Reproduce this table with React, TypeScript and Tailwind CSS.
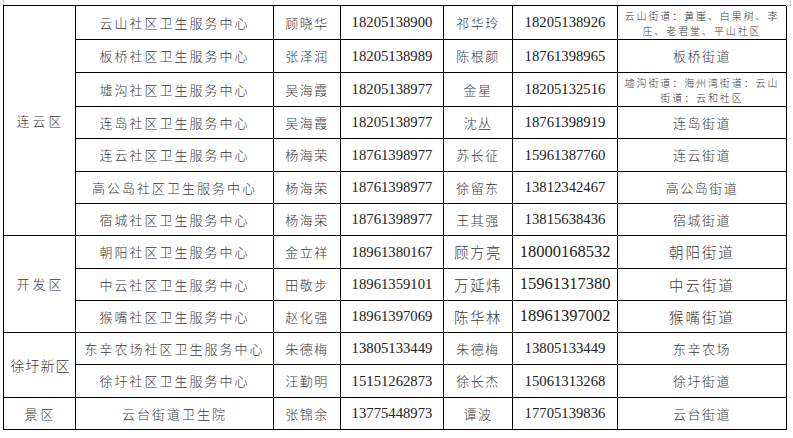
import React from "react";

type Row = {
  district?: { text: string; span: number; cls?: string };
  center: string;
  n1: string;
  p1: string;
  n2: string;
  p2: string;
  street: string[];
  streetSmall?: boolean;
  big?: boolean;
  h: number;
};

const rows: Row[] = [
  { district: { text: "连云区", span: 7 }, center: "云山社区卫生服务中心", n1: "顾晓华", p1: "18205138900", n2: "祁华玲", p2: "18205138926", street: ["云山街道：黄崖、白果树、李", "庄、老君堂、平山社区"], streetSmall: true, h: 34 },
  { center: "板桥社区卫生服务中心", n1: "张泽润", p1: "18205138989", n2: "陈根颜", p2: "18761398965", street: ["板桥街道"], h: 33 },
  { center: "墟沟社区卫生服务中心", n1: "吴海霞", p1: "18205138977", n2: "金星", p2: "18205132516", street: ["墟沟街道：海州湾街道：云山", "街道：云和社区"], streetSmall: true, h: 34 },
  { center: "连岛社区卫生服务中心", n1: "吴海霞", p1: "18205138977", n2: "沈丛", p2: "18761398919", street: ["连岛街道"], h: 32 },
  { center: "连云社区卫生服务中心", n1: "杨海荣", p1: "18761398977", n2: "苏长征", p2: "15961387760", street: ["连云街道"], h: 33 },
  { center: "高公岛社区卫生服务中心", n1: "杨海荣", p1: "18761398977", n2: "徐留东", p2: "13812342467", street: ["高公岛街道"], h: 32 },
  { center: "宿城社区卫生服务中心", n1: "杨海荣", p1: "18761398977", n2: "王其强", p2: "13815638436", street: ["宿城街道"], h: 32 },
  { district: { text: "开发区", span: 3 }, center: "朝阳社区卫生服务中心", n1: "金立祥", p1: "18961380167", n2: "顾方亮", p2: "18000168532", street: ["朝阳街道"], big: true, h: 33 },
  { center: "中云社区卫生服务中心", n1: "田敬步", p1: "18961359101", n2: "万延炜", p2: "15961317380", street: ["中云街道"], big: true, h: 32 },
  { center: "猴嘴社区卫生服务中心", n1: "赵化强", p1: "18961397069", n2: "陈华林", p2: "18961397002", street: ["猴嘴街道"], big: true, h: 32 },
  { district: { text: "徐圩新区", span: 2, cls: "text-[14px] tracking-[1px]" }, center: "东辛农场社区卫生服务中心", n1: "朱德梅", p1: "13805133449", n2: "朱德梅", p2: "13805133449", street: ["东辛农场"], h: 32 },
  { center: "徐圩社区卫生服务中心", n1: "汪勤明", p1: "15151262873", n2: "徐长杰", p2: "15061313268", street: ["徐圩街道"], h: 33 },
  { district: { text: "景区", span: 1 }, center: "云台街道卫生院", n1: "张锦余", p1: "13775448973", n2: "谭波", p2: "17705139836", street: ["云台街道"], h: 32 },
];

const cjk = "font-['Noto_Sans_CJK_SC',sans-serif] font-light text-[#3a3a3a]";
const num = "font-['Liberation_Serif','Times_New_Roman',serif] text-[#222]";
const cell = "border border-black text-center align-middle p-0 overflow-hidden";

export default function App() {
  return (
    <div className="relative w-[793px] h-[438px] bg-white">
      <div className="absolute left-[3px] top-0 w-px h-[5px] bg-[#c8c8c8]" />
      <div className="absolute left-[790px] top-0 w-px h-[5px] bg-[#c8c8c8]" />
      <div className="absolute left-[786px] top-[5px] w-[5px] h-px bg-[#c8c8c8]" />
      <div className="pt-[5px] pl-[3px]">
        <table className="table-fixed border-collapse w-[783px]">
          <colgroup>
            <col className="w-[72px]" />
            <col className="w-[198px]" />
            <col className="w-[67px]" />
            <col className="w-[103px]" />
            <col className="w-[69px]" />
            <col className="w-[105px]" />
            <col className="w-[169px]" />
          </colgroup>
          <tbody>
            {rows.map((r, i) => (
              <tr key={i} style={{ height: r.h }}>
                {r.district && (
                  <td rowSpan={r.district.span} className={`${cell} ${cjk} whitespace-nowrap ${r.district.cls ?? "text-[13px] tracking-[3px]"}`}>
                    <span className="relative left-[1px]">{r.district.text}</span>
                  </td>
                )}
                <td className={`${cell} ${cjk} whitespace-nowrap text-[13px] tracking-[2px]`}>{r.center}</td>
                <td className={`${cell} ${cjk} whitespace-nowrap text-[13px] tracking-[1.5px]`}>{r.n1}</td>
                <td className={`${cell} ${num} whitespace-nowrap text-[14.7px]`}>{r.p1}</td>
                <td className={`${cell} ${cjk} whitespace-nowrap ${r.big ? "text-[14.5px] tracking-[1.5px]" : "text-[13px] tracking-[1.5px]"}`}>{r.n2}</td>
                <td className={`${cell} ${num} whitespace-nowrap ${r.big ? "text-[16.5px]" : "text-[14.7px]"}`}>{r.p2}</td>
                {r.streetSmall ? (
                  <td className={`${cell} ${cjk} text-[10px] tracking-[1.9px] leading-[15px]`}>
                    {r.street.map((l, j) => (
                      <div key={j} className="whitespace-nowrap">{l}</div>
                    ))}
                  </td>
                ) : (
                  <td className={`${cell} ${cjk} whitespace-nowrap ${r.big ? "text-[14.5px] tracking-[2px]" : "text-[13px] tracking-[1.5px]"}`}>{r.street[0]}</td>
                )}
              </tr>
            ))}
          </tbody>
        </table>
      </div>
    </div>
  );
}
